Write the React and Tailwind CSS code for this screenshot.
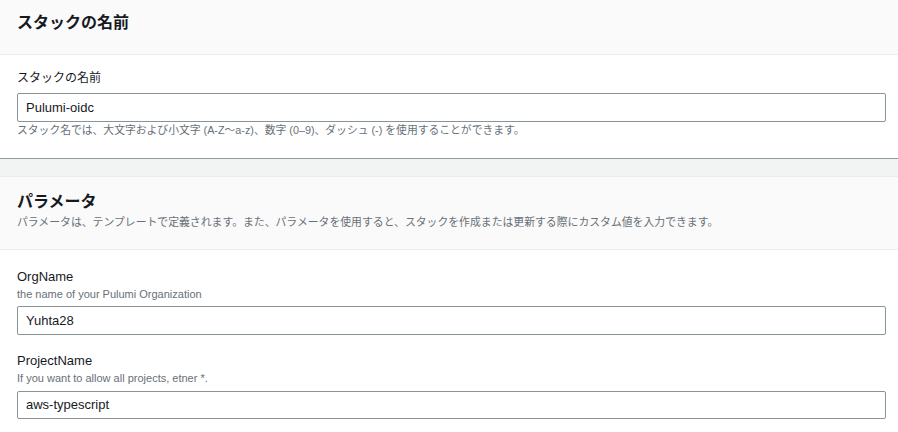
import React from 'react';

const font = { fontFamily: '"Liberation Sans", "Noto Sans CJK JP", sans-serif' };

// Simple text input box, like the console form fields
const Field = ({ value, className = '' }) => (
    <div className={`flex items-center h-[29px] border border-[#879596] rounded-[2px] bg-white px-[8px] text-[13px] text-[#16191f] ${className}`}>
        {value}
    </div>
);

const App = () => {
    return (
        <div className="w-[898px] h-[432px] overflow-hidden bg-white" style={font}>
            {/* Stack name card */}
            <div className="bg-white border-b border-[#8f9a9b]">
                <div className="h-[55px] bg-[#fafafa] border-b border-[#eaeded] pl-[17px] pt-[12px]">
                    <h2 className="text-[16px] leading-[22px] font-bold text-[#16191f]">スタックの名前</h2>
                </div>
                <div className="pl-[17px] pr-[12px] pt-[13px] pb-[20px]">
                    <div className="text-[12px] leading-[20px] text-[#16191f]">スタックの名前</div>
                    <Field value="Pulumi-oidc" className="mt-[5px]" />
                    <div className="text-[10.8px] leading-[16px] text-[#687078]">
                        スタック名では、大文字および小文字 (A-Z〜a-z)、数字 (0–9)、ダッシュ (-) を使用することができます。
                    </div>
                </div>
            </div>

            <div className="h-[17px] bg-[#f2f3f3]" />

            {/* Parameters card */}
            <div className="bg-white border-t border-[#eaeded]">
                <div className="bg-[#fafafa] border-b border-[#eaeded] pl-[17px] pt-[14px] pb-[18px]">
                    <h2 className="text-[16px] leading-[22px] font-bold text-[#16191f]">パラメータ</h2>
                    <p className="text-[10.85px] leading-[18px] text-[#687078]">
                        パラメータは、テンプレートで定義されます。また、パラメータを使用すると、スタックを作成または更新する際にカスタム値を入力できます。
                    </p>
                </div>
                <div className="pl-[17px] pr-[12px] pt-[17px]">
                    <div className="text-[13px] leading-[19px] text-[#16191f]">OrgName</div>
                    <div className="text-[11px] leading-[16px] text-[#687078]">the name of your Pulumi Organization</div>
                    <Field value="Yuhta28" className="mt-[4px]" />

                    <div className="mt-[16px] text-[13px] leading-[19px] text-[#16191f]">ProjectName</div>
                    <div className="text-[11px] leading-[16px] text-[#687078]">If you want to allow all projects, etner *.</div>
                    <Field value="aws-typescript" className="mt-[5px] !h-[28px]" />
                </div>
            </div>
        </div>
    );
};

export default App;
